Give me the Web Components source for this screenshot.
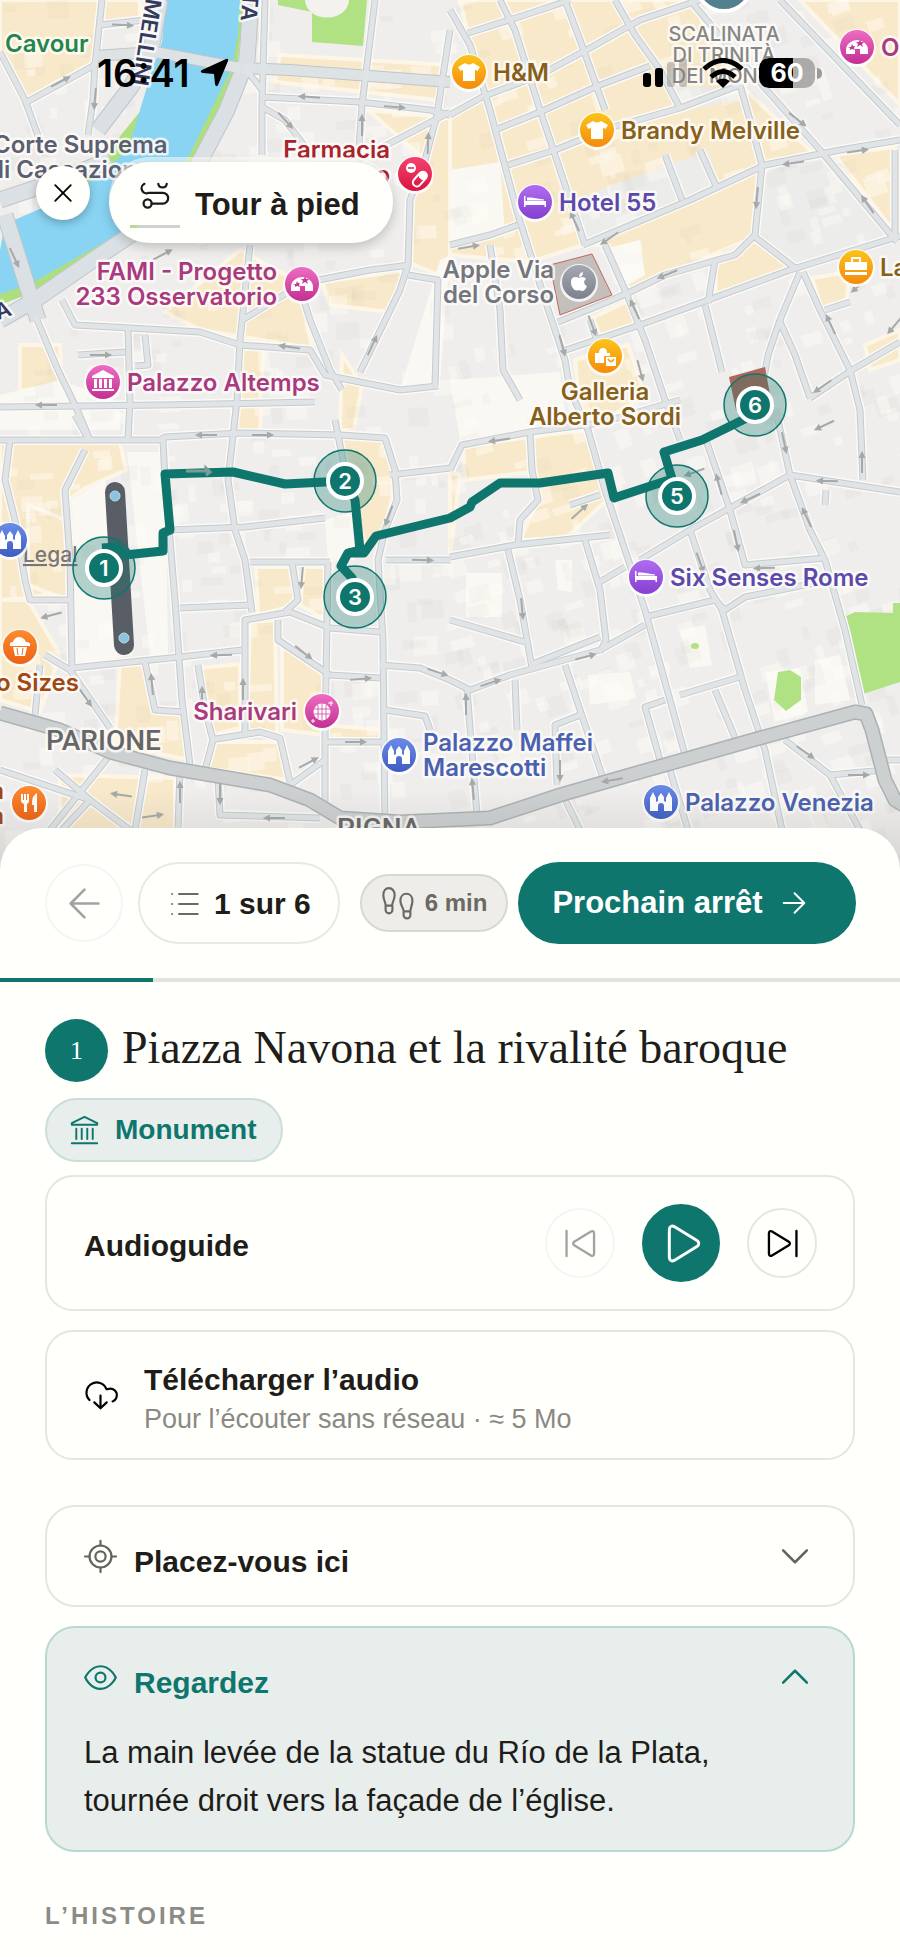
<!DOCTYPE html>
<html lang="fr">
<head>
<meta charset="utf-8">
<meta name="viewport" content="width=device-width, initial-scale=1">
<title>Tour à pied</title>
<style>
  html { background: #fffffc; }
  body { margin: 0; font-family: "Liberation Sans", Arial, sans-serif; color: #1f1d1a; -webkit-font-smoothing: antialiased; }
</style>
</head>
<body>
<tour-app></tour-app>

<script>
/* ---------- icons ---------- */
const ICONS = {
  close: '<path d="M3.500 3.500 20.500 20.500M20.500 3.500 3.500 20.500"/>',
  route: '<circle cx="5" cy="20" r="3.600"/><path d="M8.600 20H18.500a4.500 4.500 0 0 0 0-9.500H6A4.300 4.300 0 0 1 2.200 2.500"/><path d="M14.500 2.500a3.800 3.800 0 0 0 7.500 0"/>',
  back: '<path d="M21.500 12H2.500M12 2.500 2.500 12 12 21.500"/>',
  next: '<path d="M2.500 12H21.500M12.500 3l9 9-9 9"/>',
  list: '<path d="M8 4H23M8 12H23M8 20H23"/><path d="M2.500 4h.01M2.500 12h.01M2.500 20h.01"/>',
  steps: '<path d="M2.800 14.500C2.800 11 1 10 1 6 1 2.800 2.800.800 5.200.800S9.500 3 9.500 6c0 4-2 5-2 8.500M2.700 14h5.100v3.200a2.550 2.550 0 0 1-5.100 0z"/><path d="M16.300 18.800c0-3.500-2.500-4.500-2.500-8.500 0-3.200 2-5.200 4.500-5.200s4.500 2 4.500 5.200c0 4-1.600 5-1.600 8.500M16.200 18.300h5.100v2.700a2.550 2.550 0 0 1-5.100 0z"/>',
  museum: '<path d="M12 .800 22.500 5.800v1.400h-21V5.800zM1.500 22.500h21M5.200 10.500v8.500M9.700 10.500v8.500M14.300 10.500v8.500M18.800 10.500v8.500"/>',
  play: '<path d="M4.500 3.500v17c0 1.800 1.500 2.700 3 1.900l14-8.500c1.500-.900 1.500-2.900 0-3.800l-14-8.500c-1.500-.800-3 .1-3 1.900z"/>',
  skip: '<path d="M1.500 4v16c0 1.300 1.200 2 2.400 1.300l13-7.900c1.100-.700 1.100-2.100 0-2.800l-13-7.900C2.700 2 1.500 2.700 1.500 4zM22.800 2.200v19.600"/>',
  rewind: '<path d="M22.500 4v16c0 1.300-1.200 2-2.400 1.300l-13-7.900c-1.100-.700-1.100-2.100 0-2.800l13-7.900c1.200-.700 2.400 0 2.400 1.300zM1.200 2.200v19.600"/>',
  cloud: '<path d="M4 15.300A7.500 7.500 0 1 1 16.300 7.300h1.200A4.700 4.700 0 0 1 20.800 16.300"/><path d="M12 12v9.300M7.500 17l4.500 4.300 4.500-4.300"/>',
  target: '<circle cx="12" cy="12" r="8"/><circle cx="12" cy="12" r="3.700"/><path d="M12 .700V4M12 20v3.300M.700 12H4M20 12h3.300"/>',
  eye: '<path d="M.900 12S4.500 3.800 12 3.800 23.100 12 23.100 12 19.500 20.200 12 20.200.900 12 .900 12z"/><circle cx="12" cy="12" r="3.600"/>',
  down: '<path d="M2.500 7.500 12 17l9.500-9.500"/>',
  up: '<path d="M2.500 16.500 12 7l9.500 9.500"/>'
};
customElements.define('ui-icon', class extends HTMLElement {
  connectedCallback() {
    const root = this.attachShadow({ mode: 'open' });
    root.innerHTML = `<style>
      :host { display: block; flex: none; width: var(--size, 32px); height: var(--size, 32px); }
      svg { display: block; width: 100%; height: 100%; overflow: visible; fill: none; stroke: currentColor;
            stroke-width: var(--stroke, 1.600); stroke-linecap: round; stroke-linejoin: round; }
    </style><svg viewBox="0 0 24 24" aria-hidden="true">${ICONS[this.getAttribute('name')]}</svg>`;
  }
});

/* ---------- city map ---------- */
const TAN = [
  '0,0 140,0 140,20 102,24 95,63 25,100 0,50', '280,55 450,65 436,100 275,82', '368,110 450,118 450,280 408,262 410,200 425,160',
  '460,0 690,0 740,85 815,155 765,170 752,238 630,290 605,245 583,245 530,262 450,255 450,110 482,95',
  '835,155 895,147 893,230', '715,258 752,240 800,265 716,300', '592,318 630,300 638,325 600,335',
  '575,360 628,345 645,395 605,420 580,412', '463,446 585,430 607,500 566,538 520,540 538,500 532,472 465,480',
  '800,0 900,0 900,105', '812,278 850,272 846,305 822,310', '165,312 240,250 300,283 312,348 200,330',
  '240,348 264,350 260,400 237,400', '322,282 408,270 390,312 330,305', '342,355 362,385 354,430 340,430',
  '0,440 120,442 126,470 85,488 68,500 68,590 30,598 0,600', '340,435 386,440 396,480 385,530 366,545 350,500',
  '256,567 292,567 296,605 258,615', '304,567 328,567 326,620 300,605', '250,622 275,620 277,735 247,735',
  '282,645 325,676 325,735 282,730', '120,662 145,665 155,710 185,715 190,760 115,745', '200,668 240,664 240,728 212,735',
  '214,742 280,742 287,780 206,768', '60,775 175,778 175,830 60,830', '28,600 60,655 40,712 0,700 0,600', '28,505 66,520 68,600 28,585',
  '232,400 262,402 260,430 232,430', '325,725 383,730 383,742 325,742', '450,472 460,475 450,557', '20,345 60,345 62,390 20,390', '865,345 900,330 900,360 870,370'
];
const GREY = ['572,200 710,150 716,188 585,243', '665,85 740,90 735,100 690,110', '770,165 815,155 895,245 800,268 755,232'];
const WHITE = ['127,452 165,452 168,655 150,655', '72,500 105,478 132,655 75,665', '325,520 352,512 355,560 328,562', '450,380 560,372 566,420 460,440', '600,250 640,240 645,275 628,285', '450,170 500,162 505,235 450,245', '466,573 502,573 502,617 466,617', '555,560 572,560 572,592 558,590', '588,675 630,672 636,698 590,705', '815,660 840,655 850,700 815,705', '680,630 705,625 712,665 690,668', '440,260 450,255 440,380 400,390', '765,672 800,668 808,712 775,722', '0,395 60,380 120,402 120,430 0,430'];
const ROADS = [
  '265,0 262,105 262,155', '375,0 362,105 358,160', '245,68 262,90', '262,97 360,102 430,110 450,115', '262,107 285,120 306,148',
  '450,30 437,115 425,160 410,200 408,265 400,290 360,372', '358,160 450,112', '0,52 25,100 45,155', '25,103 95,65 102,0', '95,62 93,100 88,135',
  '100,25 145,20', '35,315 58,370 75,405 90,440', '62,300 75,325 130,328 200,332 240,345 310,350 325,375 400,390 438,386',
  '240,340 237,400 228,480 235,530 245,560 252,612', '295,272 310,320 330,370 342,390', '250,245 240,340', '308,282 370,270 410,265',
  '242,320 300,285', '0,407 160,405 315,402', '128,330 130,400', '145,335 148,365 135,366', '78,355 125,352', '408,275 438,280 435,386',
  '450,10 470,45 490,110 518,215 545,300 565,360 570,390 588,430 605,490 645,610 670,700 685,755', '468,33 525,15 570,0',
  '450,115 482,97 540,75 590,48 640,20 700,0', '495,130 540,112 600,85 650,66', '508,165 555,150 610,128 680,108 740,85',
  '500,0 515,30 540,110 555,155 585,245', '565,0 580,40 605,110', '615,0 635,35 660,70 680,108', '740,85 750,120 762,165 755,235 735,255 665,275 630,292',
  '583,245 690,200 765,165 840,150 900,140', '690,0 740,60 820,150 897,242', '780,0 900,125', '665,155 682,200', '700,150 716,186',
  '605,245 625,290 645,340 665,400 680,440', '558,322 605,303 630,292', '450,245 490,235 518,225', '560,352 640,325 700,303 790,270 900,236',
  '715,260 708,303', '755,237 795,268', '800,272 780,320 768,355 762,390', '780,322 795,355 810,398', '803,272 820,310 850,370 860,410 863,480',
  '810,398 852,370 900,342', '895,150 895,240', '490,245 500,310 503,370 520,400', '705,305 722,372', '590,320 600,350', '825,310 850,302',
  '0,440 160,440 165,437 240,433 340,435 385,438 395,470 397,500 385,530 378,560 383,640 385,830', '163,440 165,480 175,600 182,700 190,765',
  '170,530 245,527 325,518', '335,420 345,470', '10,440 5,480 15,520 25,580 30,600 72,600', '85,450 65,490 70,560 72,668', '75,415 90,442', '130,400 128,440',
  '72,668 180,657 242,650', '250,562 330,562', '180,608 250,605', '292,562 298,600 285,612', '245,735 245,620 290,612 330,628 380,632', '278,620 278,640 330,675 380,678',
  '328,562 325,740 325,810', '210,740 260,732 280,738 290,782', '198,665 205,710 213,740 205,770', '145,662 155,710 185,712', '45,655 70,670 110,728',
  '40,665 35,715', '110,755 50,830', '0,770 90,800 130,830', '55,770 90,800 62,830', '145,770 135,830', '180,770 178,830', '218,780 220,815 320,818',
  '325,742 385,742', '290,785 325,760', '380,665 420,668 450,680', '385,710 425,716 430,730', '386,560 450,560', '390,475 450,468',
  '450,470 462,445 530,432 600,423 680,400', '530,432 532,470 538,500 520,520 518,545', '450,557 515,545 610,535', '508,550 520,600 532,668',
  '585,540 600,590 606,640 600,652', '600,582 625,567', '450,680 470,690 510,675 600,650 645,625', '530,665 600,637', '565,665 580,710 602,775',
  '645,617 715,600 725,610 745,597 830,580', '690,530 710,590 722,610 745,690 765,750 782,830', '640,560 690,530 790,475 900,492', '790,475 778,420', '790,475 810,530 825,560 845,630 862,705',
  '706,440 730,510 745,565 825,558', '825,505 826,490', '660,760 645,707 665,700', '680,695 740,677', '715,690 738,745', '785,740 830,775 885,770', '830,775 860,830',
  '670,770 688,830', '563,795 580,830', '467,690 477,815', '557,785 555,725 580,715', '515,680 517,730', '570,505 600,495', '880,760 900,760', '450,620 525,642'
];
const MAJOR = ['160,0 150,55 130,88 98,130', '0,200 45,185 110,160', '251,0 247,60 226,112 197,167 150,222 90,262 35,300 0,320', '5,215 30,295 38,320'];
const BRIDGE = '95,56 155,52 240,68 290,70 450,82';
const AVENUE = '0,713 60,730 110,752 170,768 270,785 310,800 340,818 400,822 490,818 560,795 640,772 760,738 855,712 866,714 872,730 885,780 895,800 905,806';
const ARROWS = [[122,25,3],[60,82,-28],[95,98,95],[285,120,48],[310,97,184],[394,107,5],[362,126,-90],[428,144,-88],[14,257,65],[100,355,0],[290,347,188],[372,346,-65],[47,405,180],[162,255,-28],[207,435,180],[262,435,0],[389,515,110],[422,560,2],[302,577,95],[52,615,165],[222,655,178],[85,697,55],[152,685,-95],[243,690,-90],[202,698,-90],[303,652,38],[360,679,-5],[355,742,0],[308,763,-28],[122,795,188],[180,793,-90],[220,793,90],[152,816,-8],[275,818,180],[437,672,18],[797,119,38],[857,151,-8],[794,163,172],[757,197,95],[868,205,-125],[668,274,158],[575,222,-115],[610,238,145],[468,247,-10],[592,325,70],[635,310,-115],[562,345,75],[640,370,75],[831,325,-115],[895,325,130],[860,285,140],[823,386,145],[825,425,155],[862,463,-90],[828,481,182],[784,442,78],[751,498,155],[719,485,-105],[736,540,78],[807,518,-115],[579,512,-42],[500,440,172],[522,608,85],[585,657,-15],[490,683,-18],[466,705,-90],[765,568,178],[700,562,70],[473,790,-95],[560,770,90],[613,780,170],[805,752,35],[858,775,0],[695,472,160]];

const PINS = {
  shirt: '<path d="M-4-9-11-5-8.500-1-6-2.500V9H6V-2.500L8.500-1 11-5 4-9Q0-6-4-9z"/>',
  bed: '<path d="M-11-6h1.500v5H11V5H9.500V3H-9.500v2h-1.500z"/><path d="M-8-4.500h4l13 2v1H-8z"/>',
  dome: '<path d="M-11 7v-4a11 10 0 0 1 22 0v4H3V2h-5v5z"/><path fill="#c23b9c" d="m-5-3 1 2h2l-1 2 1 2-3-1-2 1V1l-2-1h3zm8-5 1 3h3L5-3l1 3-3-2-3 2 1-3-2-2h3z"/>',
  apple: '<path d="M0-4C3-6 6-5 7-3 4-1 5 3 8 4 6 9 4 10 0 8-4 10-8 6-8 0-8-5-4-6 0-4zM0-5q0-4 4-5Q4-5 0-5z"/>',
  bags: '<path d="M-10-3h4q0-5 4-5t4 5h3v3H-1v7h-9z"/><path d="M1 1h10v9H1z"/><path d="M3 3q3 5 6 0" fill="none" stroke="#f7a010" stroke-width="1.500"/>',
  case: '<path d="M-11-5h22v8h-22zM-11 5h22v3h-22z"/><path d="M-4-5v-4h8v4" fill="none" stroke="#fff" stroke-width="2"/>',
  pill: '<circle cx="-4" cy="-6" r="5"/><g transform="rotate(-48)"><rect x="-9" y="3" width="17" height="8" rx="4" fill="none" stroke="#fff" stroke-width="2"/><rect x="0" y="3" width="8" height="8" rx="4"/></g><path d="M-7-6h6" stroke="#e0244e" stroke-width="1.500"/>',
  museum: '<path d="M0-12 11-6v2h-22v-2zM-9-3h3V6h-3zM-4-3h3V6h-3zM1-3h3V6H1zM6-3h3V6H6zM-11 7h22v2h-22z"/>',
  castle: '<path d="M-11 9V-4l3-6 3 6V0l2-1v-4l3-4 3 4v4l2 1v-4l3-6 3 6V9H3V4a3 3 0 0 0-6 0v5z"/>',
  cake: '<path d="M-7 0H7L5 9H-5z"/><path d="M-10-1q-1-4 3-4 1-4 5-5 6 0 8 5 5 0 4 4z"/><path d="M-3 1-2 8M3 1 2 8" stroke="#f0701a"/>',
  disco: '<circle r="8.500" cy="1"/><path d="M-8-2H8M-8 3H8M0-8V9M-4-6v14M4-6v14" stroke="#d33fa4" stroke-width=".800"/><path d="M9-10v5M6-8h5M-9 8v4M-11 10h4" stroke="#fff"/>',
  fork: '<path d="M-8-9h2v6h1v-6h2v6h1v-6h2v7q0 2-2 3V9h-3V1q-3-1-3-3zM3-1q0-6 5-9V9H5V2H3z"/>'
};
const HUES = { gold: ['#fcc419', '#f58a0c', '#86601a'], violet: ['#b06cf0', '#8440cf', '#5c49ab'], pink: ['#ee6dc2', '#c32f92', '#a93a7f'],
  red: ['#f4436f', '#d9153f', '#a8232c'], slate: ['#a5a8b2', '#7d818d', '#74767d'], blue: ['#6b8be8', '#3f5cc2', '#4a61b0'], orange: ['#fb8b32', '#ee6212', '#a04712'] };
/* x, y of the badge, glyph, hue, side of the label, label lines */
const POIS = [
  [469,72,'shirt','gold','r','H&amp;M'], [597,130,'shirt','gold','r','Brandy Melville'], [535,202,'bed','violet','r','Hotel 55'],
  [857,47,'dome','pink','r','O'], [579,282,'apple','slate','l','Apple Via|del Corso'], [856,267,'case','gold','r','La'],
  [605,356,'bags','gold','b','Galleria|Alberto Sordi'], [415,174,'pill','red','l',''], [302,284,'dome','pink','l','FAMI - Progetto|233 Osservatorio'],
  [103,382,'museum','pink','r','Palazzo Altemps'], [10,540,'castle','blue','r',''], [20,647,'cake','orange','r',''],
  [322,711,'disco','pink','l','Sharivari'], [399,755,'castle','blue','r','Palazzo Maffei|Marescotti'], [646,577,'bed','violet','r','Six Senses Rome'],
  [661,802,'castle','blue','r','Palazzo Venezia'], [29,803,'fork','orange','l','a|a']
];
const STOPS = [[104,568,1],[345,481,2],[355,597,3],[677,496,5],[755,405,6]];

customElements.define('city-map', class extends HTMLElement {
  connectedCallback() {
    const lines = (list, cls) => list.map(p => `<polyline class="${cls}" points="${p}"/>`).join('');
    const polys = (list, cls) => list.map(p => `<polygon class="${cls}" points="${p}"/>`).join('');
    let seed = 7;
    const rnd = () => (seed = (seed * 16807) % 2147483647) / 2147483647;
    let blocks = '';
    for (let i = 0; i < 900; i++) {
      const x = Math.round(rnd() * 900), y = Math.round(rnd() * 860), w = 6 + Math.round(rnd() * 18), h = 6 + Math.round(rnd() * 14);
      const tilt = x > 440 ? -17 : -3;
      const light = rnd() > .45;
      blocks += `<rect x="${x}" y="${y}" width="${w}" height="${h}" transform="rotate(${tilt} ${x} ${y})" fill="${light ? '#fffdf6' : '#99958a'}" opacity="${light ? .4 : .05}"/>`;
    }
    const poi = ([x, y, glyph, hue, side, label]) => {
      const rows = label ? label.split('|') : [];
      const at = side === 'r' ? [x + 24, 'start'] : side === 'l' ? [x - 25, 'end'] : [x, 'middle'];
      const top = side === 'b' ? y + 44 : y + 9 - (rows.length - 1) * 13;
      return `<circle cx="${x}" cy="${y + 1}" r="19" fill="#fff" opacity=".8"/><circle cx="${x}" cy="${y}" r="17" fill="url(#${hue})"/>
        <g transform="translate(${x} ${y})" fill="#fff">${PINS[glyph]}</g>` +
        rows.map((t, i) => `<text class="poi" x="${at[0]}" y="${top + i * 25}" text-anchor="${at[1]}" fill="${HUES[hue][2]}">${t}</text>`).join('');
    };
    this.attachShadow({ mode: 'open' }).innerHTML = `<style>
      :host { display: block; }
      svg { display: block; width: 100%; height: auto; font-family: Inter, sans-serif; }
      .tan { fill: #f9e9cb; stroke: #fdf6e6; stroke-width: 4; } .grey { fill: #ececeb; } .white { fill: #f9f8f3; }
      polyline { fill: none; stroke-linejoin: round; }
      .glow { stroke: #fbfaf7; stroke-width: 10; }
      .edge { stroke: #c6cbcd; stroke-width: 7; } .road { stroke: #e0e4e6; stroke-width: 5; }
      .edge2 { stroke: #c0c5c8; stroke-width: 17; } .road2 { stroke: #dbe0e4; stroke-width: 15; }
      .edge3 { stroke: #c0c5c8; stroke-width: 12; } .road3 { stroke: #dde2e5; stroke-width: 10; }
      .halo, .poi { paint-order: stroke; stroke: #fffdfa; stroke-opacity: .8; stroke-width: 5px; stroke-linejoin: round; }
      .poi { font-size: 24px; font-weight: 600; }
      .street { font-size: 22px; font-weight: 600; fill: #343a5e; }
      .area { font-family: Roboto, sans-serif; font-size: 28px; font-weight: 500; fill: #666; }
      .stop { font-size: 22px; font-weight: 600; fill: #fff; text-anchor: middle; }
      .steps { font-size: 20px; font-weight: 500; fill: #868684; text-anchor: middle; }
      .route { stroke: #0f766e; stroke-width: 9; }
    </style>
    <svg viewBox="0 0 900 870" role="img" aria-label="Carte du parcours à pied">
      <defs>${Object.entries(HUES).map(([k, c]) => `<linearGradient id="${k}" x2="0" y2="1"><stop stop-color="${c[0]}"/><stop offset="1" stop-color="${c[1]}"/></linearGradient>`).join('')}
        <linearGradient id="fade" x2="0" y2="1"><stop stop-color="#6b675f" stop-opacity="0"/><stop offset="1" stop-color="#6b675f" stop-opacity=".2"/></linearGradient></defs>
      <rect width="900" height="870" fill="#efeeed"/>
      ${polys(TAN, 'tan')}${polys(GREY, 'grey')}${polys(WHITE, 'white')}
      ${blocks}
      <path fill="#b0e283" d="M278 0H367L363 46 312 42V12L278 5zM842 618 855 612 893 613V603H900V682L863 694zM778 672 790 670 801 677V700L786 711 774 700zM691 646a4 3 0 1 0 8 0 4 3 0 1 0-8 0z"/>
      <path fill="#f3f2ee" d="M305 0a20 16 0 0 0 44 0z"/>
      ${lines(ROADS, 'glow')}
      <path fill="#addf80" d="M230 0H244L238 60 224 100 196 160 160 212 122 243 34 292 0 305V285z"/>
      <path fill="#89d4f3" d="M166 0H240L238 35 232 68 214 104 190 154 150 212 108 240 30 284 0 294V250L5 224 42 208 92 180 128 150 143 100 152 70 162 42z"/>
      ${lines(MAJOR, 'edge2')}${lines([BRIDGE], 'edge3')}${lines(ROADS, 'edge')}${lines(MAJOR, 'road2')}${lines([BRIDGE], 'road3')}${lines(ROADS, 'road')}
      <polyline points="${AVENUE}" stroke="#acb1b3" stroke-width="15"/><polyline points="${AVENUE}" stroke="#ccd0d1" stroke-width="12"/>
      <g stroke="#a6a9aa" stroke-width="2" fill="#a6a9aa">${ARROWS.map(([x, y, a]) => `<path transform="translate(${x} ${y}) rotate(${a})" d="M-10 0H6V-2L10 0 6 2V0"/>`).join('')}</g>
      <polygon points="550,265 592,254 612,295 560,315" fill="#c5bfbc" stroke="#c4675c"/>
      <polygon points="729,377 765,367 770,395 736,410" fill="#b0665a"/>
      <path d="M115 492 124 645" stroke="#595d66" stroke-width="20" stroke-linecap="round"/>
      <g fill="#8cc4df" stroke="#b9dbe8"><circle cx="115" cy="496" r="5"/><circle cx="124" cy="638" r="5"/></g>
      <g class="street halo">
        <text transform="translate(146 -2) rotate(99)">MELLINI</text>
        <text transform="translate(243 -8) rotate(95)">TA</text><text transform="translate(-18 326) rotate(-20)">NA</text>
      </g>
      <g class="steps halo"><text x="724" y="41">SCALINATA</text><text x="724" y="62">DI TRINITÀ</text><text x="724" y="83">DEI MONTI</text></g>
      <g class="poi"><text x="5" y="52" fill="#23864a">Cavour</text>
        <g fill="#5b5f70"><text x="-7" y="153">Corte Suprema</text><text x="-11" y="178">di Cassazione</text></g>
        <g fill="#a8232c" text-anchor="end"><text x="390" y="158">Farmacia</text><text x="390" y="183">o</text></g>
        <text x="79" y="691" text-anchor="end" fill="#a04712">o Sizes</text></g>
      <g class="area halo"><text x="46" y="750">PARIONE</text><text x="337" y="838">PIGNA</text></g>
      <text x="23" y="562" font-size="21" font-weight="500" fill="#777" text-decoration="underline">Legal</text>
      <circle cx="724" cy="-17" r="28" fill="#53808f" stroke="#fff" stroke-width="4"/>
      <polyline class="route" points="102,548 116,547 125,555 163,551 163,533 170,530 165,474 233,472 285,484 345,481 355,500 360,550 348,553 341,566 352,578 355,597"/>
      <polyline class="route" points="348,553 364,553 376,536 450,518 470,507 472,502 500,483 540,483 608,473 614,498 672,479 664,452 702,440 755,414"/>
      <path d="M186 471H206V468L210 472 206 475" stroke="#7a9b97" stroke-width="3" fill="none"/>
      ${STOPS.map(([x, y, n]) => `<circle cx="${x}" cy="${y}" r="31" fill="#0f766e" fill-opacity=".3" stroke="#0f766e" stroke-width="1.500"/>
        <circle cx="${x}" cy="${y}" r="17" fill="#0f766e" stroke="#fff" stroke-width="4"/><text class="stop" x="${x}" y="${y + 8}">${n}</text>`).join('')}
      ${POIS.map(poi).join('')}
      <path d="M0 790H900V870H0z" fill="url(#fade)"/>
    </svg>`;
  }
});

customElements.define('status-bar', class extends HTMLElement {
  connectedCallback() {
    this.attachShadow({ mode: 'open' }).innerHTML = `<style>
      :host { display: flex; justify-content: space-between; align-items: center; padding: 0 85px 0 97px; font-family: Inter, sans-serif; color: #000; }
      div { display: flex; align-items: center; } .time { font-size: 38px; line-height: 46px; font-weight: 600; gap: 9px; } .state { gap: 15px; }
      .battery { position: relative; width: 56px; height: 30px; border-radius: 10px; justify-content: center; background: linear-gradient(90deg, #000 60%, #8e8e8eb0 60%); color: #fff; font-size: 25px; font-weight: 700; }
      .battery::after { content: ""; position: absolute; left: 58px; top: 10px; width: 5px; height: 11px; border-radius: 0 5px 5px 0; background: #9a9a9a; }
    </style>
    <div class="time"><span>16:41</span><svg width="30" height="30" viewBox="0 0 30 30"><path d="M27 1Q30 0 29 3L19 27Q17 30 16 26L15 16 4 15Q0 14 3 12z"/></svg></div>
    <div class="state">
      <svg width="44" height="30" viewBox="0 0 44 30"><rect y="15" width="8" height="14" rx="3"/><rect x="12" y="10" width="8" height="19" rx="3"/><g fill="#8887" ><rect x="24" y="4" width="8" height="25" rx="3"/><rect x="36" y="0" width="8" height="29" rx="3"/></g></svg>
      <svg width="42" height="30" viewBox="0 0 42 30"><g fill="none" stroke="#000" stroke-width="5"><path d="M2 11Q21-6 40 11M9 19Q21 8 33 19"/></g><path d="M14 23Q21 18 28 23L21 30z"/></svg>
      <div class="battery">60</div>
    </div>`;
  }
});

/* ---------- controls ---------- */
customElements.define('round-button', class extends HTMLElement {
  connectedCallback() {
    this.attachShadow({ mode: 'open' }).innerHTML = `<style>
      :host { display: block; flex: none; }
      button { display: flex; align-items: center; justify-content: center; width: var(--d, 70px); height: var(--d, 70px); padding: 0; box-sizing: border-box;
        border: 2px solid #e6e5e2; border-radius: 50%; background: #fffffc; color: #000; }
      :host([faded]) button { border-color: #f6f5f3; color: #a3a2a0; }
      :host([solid]) button { border-color: #0f766e; background: #0f766e; color: #fff; }
      :host([floating]) button { border: 0; box-shadow: 0 3px 10px #0004; }
    </style><button type="button" aria-label="${this.getAttribute('label')}"><slot></slot></button>`;
  }
});

customElements.define('tour-hero', class extends HTMLElement {
  connectedCallback() {
    this.attachShadow({ mode: 'open' }).innerHTML = `<style>
      :host { display: block; position: relative; overflow: hidden; }
      status-bar { position: absolute; inset: 50px 0 auto; }
      .bar { position: absolute; top: 162px; left: 36px; display: flex; align-items: center; gap: 19px; }
      round-button { --d: 54px; --size: 22px; --stroke: 2; margin-bottom: 19px; }
      button { display: flex; align-items: center; gap: 15px; height: 81px; padding: 4px 33px 0 21px; border: 0; border-radius: 41px; background: #fffffc;
        color: #1f1d1a; font: bold 31px/36px "Liberation Sans", sans-serif; box-shadow: 0 4px 12px #0003, 0 -5px 0 #fffffc90; }
      .tab ui-icon { --size: 27px; --stroke: 2; color: #1a1a1a; }
      .tab { display: flex; flex-direction: column; align-items: center; gap: 17px; }
      .tab i { width: 50px; height: 3px; background: linear-gradient(90deg, #b9d6a0 15%, #cfd1d1 15%); }
    </style>
    <city-map></city-map><status-bar></status-bar>
    <div class="bar">
      <round-button floating label="Fermer"><ui-icon name="close"></ui-icon></round-button>
      <button type="button"><span class="tab"><ui-icon name="route"></ui-icon><i></i></span>Tour à pied</button>
    </div>`;
  }
});

customElements.define('tour-nav', class extends HTMLElement {
  connectedCallback() {
    this.attachShadow({ mode: 'open' }).innerHTML = `<style>
      :host { display: block; }
      nav { display: flex; align-items: center; gap: 10px; padding: 34px 44px 34px 45px; }
      .group { display: flex; align-items: center; gap: 15px; margin-right: 10px; }
      round-button { --d: 78px; --size: 35px; --stroke: 1.800; }
      button { display: flex; align-items: center; box-sizing: border-box; height: 82px; border-radius: 41px; font: bold 31px/38px "Liberation Sans", sans-serif; white-space: nowrap; }
      .count { gap: 15px; padding: 2px 27px 0 29px; border: 2px solid #e9e8e5; background: #fffffc; color: #1f1d1a; font-size: 30px; }
      .count ui-icon { --size: 30px; color: #6b6963; }
      .walk { display: flex; align-items: center; gap: 11px; box-sizing: border-box; height: 58px; padding: 0 19px 0 20px; border: 2px solid #d8d7d4; border-radius: 29px;
        background: #eeedea; color: #6b6963; font: bold 24px/30px "Liberation Sans", sans-serif; white-space: nowrap; }
      .next { flex: 1; gap: 18px; padding: 0 32px 0 34px; border: 0; background: #0f766e; color: #fff; }
      .next ui-icon { --size: 26px; --stroke: 1.800; }
      progress { display: block; width: 100%; height: 4px; border: 0; appearance: none; background: #e4e3e0; }
      progress::-webkit-progress-bar { background: #e4e3e0; } progress::-webkit-progress-value { background: #0f766e; }
    </style>
    <nav>
      <div class="group"><round-button faded label="Arrêt précédent"><ui-icon name="back"></ui-icon></round-button>
      <button type="button" class="count"><ui-icon name="list"></ui-icon>1 sur 6</button></div>
      <span class="walk"><ui-icon name="steps"></ui-icon>6 min</span>
      <button type="button" class="next">Prochain arrêt<ui-icon name="next"></ui-icon></button>
    </nav>
    <progress max="100" value="17" aria-label="Progression"></progress>`;
  }
});

customElements.define('info-card', class extends HTMLElement {
  connectedCallback() {
    this.attachShadow({ mode: 'open' }).innerHTML = `<style>
      :host { display: flex; align-items: center; box-sizing: border-box; padding: 22px 36px 22px 37px; border: 2px solid #e6e5e2; border-radius: 28px; background: #fffffc; }
    </style><slot></slot>`;
  }
});

customElements.define('fold-panel', class extends HTMLElement {
  connectedCallback() {
    const open = this.hasAttribute('open');
    this.attachShadow({ mode: 'open' }).innerHTML = `<style>
      :host { display: block; border: 2px solid #e6e5e2; border-radius: 30px; --ink: #1f1d1a; --mark: #65635e; }
      :host([open]) { background: #e8eeec; border-color: #b9d8ce; --ink: #0f766e; --mark: #0f766e; }
      button { display: flex; align-items: center; gap: 17px; width: 100%; height: 98px; padding: 0 43px 0 37px; border: 0; background: none; color: var(--ink);
        text-align: left; font: bold 30px/36px "Liberation Sans", sans-serif; }
      span { flex: 1; padding-top: 11px; } ui-icon { color: var(--mark); } .mark { --size: 33px; } .arrow { --size: 30px; --stroke: 2; }
      div { padding: 3px 37px 25px; font-size: 31px; line-height: 48px; }
    </style>
    <button type="button" aria-expanded="${open}"><ui-icon class="mark" name="${this.getAttribute('icon')}"></ui-icon><span>${this.getAttribute('heading')}</span>
      <ui-icon class="arrow" name="${open ? 'up' : 'down'}"></ui-icon></button>
    ${open ? '<div><slot></slot></div>' : ''}`;
  }
});

customElements.define('stop-sheet', class extends HTMLElement {
  connectedCallback() {
    this.attachShadow({ mode: 'open' }).innerHTML = `<style>
      :host { display: block; position: relative; margin-top: -42px; border-radius: 42px 42px 0 0; background: #fffffc; }
      main { padding: 37px 45px 16px; }
      header { display: flex; align-items: center; gap: 14px; }
      .num { flex: none; width: 63px; height: 63px; border-radius: 50%; background: #0f766e; color: #fff; text-align: center; font: 26px/63px "Liberation Serif", serif; }
      h1 { margin: 0; font: 400 46px/54px "Liberation Serif", serif; padding-bottom: 6px; }
      .tag { display: inline-flex; align-items: center; gap: 16px; box-sizing: border-box; height: 64px; margin: 16px 0 13px; padding: 0 24px 0 23px; border: 2px solid #cbdeda;
        border-radius: 32px; background: #e8eeec; color: #0f766e; font-size: 28px; line-height: 32px; font-weight: bold; vertical-align: top; }
      .tag ui-icon { --size: 29px; }
      b { font-size: 30px; line-height: 36px; }
      .audio { height: 136px; gap: 27px; --stroke: 1.800; } .audio b { flex: 1; padding-top: 6px; }
      .audio .main { --d: 78px; --size: 39px; } .audio { --size: 31px; }
      .load { height: 130px; margin: 19px 0 45px; gap: 27px; }
      .load p { margin: 0; padding-top: 8px; display: flex; flex-direction: column; gap: 4px; } .load span { color: #8b8984; font-size: 27px; line-height: 34px; }
      .load ui-icon { --size: 33px; color: #000; }
      fold-panel + fold-panel { margin-top: 19px; }
      h2 { margin: 48px 0 0; color: #8b8b87; font-size: 24px; line-height: 32px; letter-spacing: 3px; text-transform: uppercase; }
    </style>
    <tour-nav></tour-nav>
    <main>
      <header><span class="num">1</span><h1>Piazza Navona et la rivalité baroque</h1></header>
      <span class="tag"><ui-icon name="museum"></ui-icon>Monument</span>
      <info-card class="audio"><b>Audioguide</b>
        <round-button faded label="Précédent"><ui-icon name="rewind"></ui-icon></round-button>
        <round-button solid class="main" label="Lecture"><ui-icon name="play"></ui-icon></round-button>
        <round-button label="Suivant"><ui-icon name="skip"></ui-icon></round-button>
      </info-card>
      <info-card class="load"><ui-icon name="cloud"></ui-icon><p><b>Télécharger l’audio</b><span>Pour l’écouter sans réseau · ≈ 5 Mo</span></p></info-card>
      <fold-panel icon="target" heading="Placez-vous ici"></fold-panel>
      <fold-panel icon="eye" heading="Regardez" open>La main levée de la statue du Río de la Plata, tournée droit vers la façade de l’église.</fold-panel>
      <h2>L’histoire</h2>
    </main>`;
  }
});

customElements.define('tour-app', class extends HTMLElement {
  connectedCallback() {
    this.attachShadow({ mode: 'open' }).innerHTML = `<style>:host { display: block; }</style><tour-hero></tour-hero><stop-sheet></stop-sheet>`;
  }
});
</script>
</body>
</html>
